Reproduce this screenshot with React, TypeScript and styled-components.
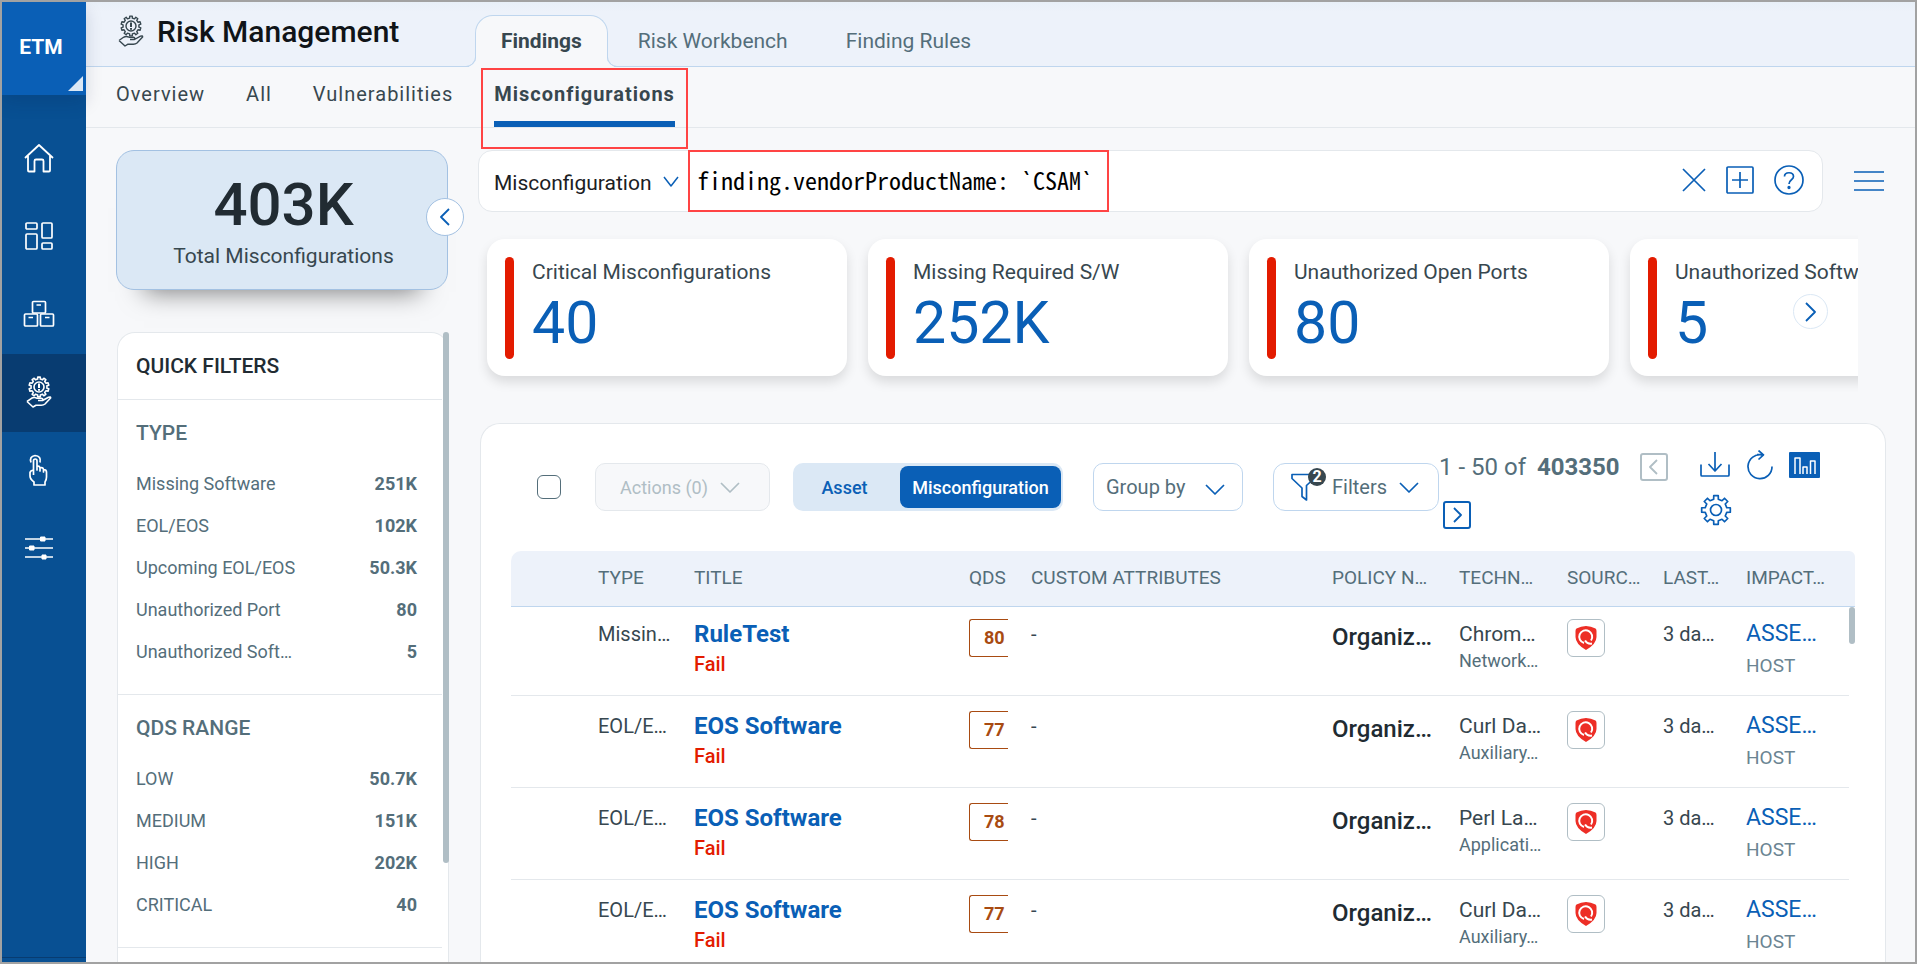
import React from "react";
import styled, { createGlobalStyle, css } from "styled-components";

const c = {
  blue: "#0a5fb6",
  rail: "#085093",
  railActive: "#083c71",
  page: "#f7f8fa",
  header: "#edf2fa",
  line: "#e4e8ec",
  blueLine: "#bfd6ee",
  paleBlue: "#dbe8f5",
  ink: "#212b32",
  text: "#37474f",
  muted: "#546e7a",
  faint: "#b0bec5",
  red: "#e31b00",
  mark: "#ff4444",
  amber: "#a84b12",
};

const GlobalStyle = createGlobalStyle`
  *, *::before, *::after { box-sizing: border-box; }
  body { margin: 0; background: ${c.page}; font-family: Roboto, "Liberation Sans", sans-serif; color: ${c.text}; }
  button, input, select { font: inherit; color: inherit; }
  button { cursor: pointer; background: none; border: 0; padding: 0; }
  a { color: inherit; text-decoration: none; }
  h1, h2, h3, p, ul, dl, dd { margin: 0; padding: 0; }
  ul { list-style: none; }
  svg { display: block; flex: none; }
`;

/* ---------- shell ---------- */
const Frame = styled.div`
  display: flex;
  height: 100vh;
  overflow: hidden;
  border: 2px solid #a2a2a2;
  background: ${c.page};
`;
const Rail = styled.nav`
  flex: 0 0 84px;
  display: flex;
  flex-direction: column;
  background: ${c.rail};
  color: #fff;
`;
const Product = styled.button`
  height: 93px;
  margin-bottom: 25px;
  padding: 0 6px 4px 0;
  position: relative;
  background: ${c.blue};
  color: #fff;
  font-size: 21px;
  font-weight: 700;
  box-shadow: 0 8px 16px rgba(0, 30, 70, 0.15);
  &::after {
    content: "";
    position: absolute;
    right: 3px;
    bottom: 4px;
    border-left: 15px solid transparent;
    border-bottom: 15px solid ${c.paleBlue};
  }
`;
const RailLink = styled.a<{ $active?: boolean }>`
  display: flex;
  justify-content: center;
  align-items: center;
  height: 78px;
  padding: 0 10px 2px 0;
  background: ${(p) => (p.$active ? c.railActive : "transparent")};
`;
const RailFoot = styled.div`
  height: 5px;
  margin-top: auto;
  border-top: 1px solid ${c.railActive};
`;
const Main = styled.main`
  flex: 1;
  min-width: 0;
  display: flex;
  flex-direction: column;
`;

/* ---------- header ---------- */
const Header = styled.header`
  flex: none;
  height: 65px;
  display: flex;
  background: linear-gradient(#e8f0f8, ${c.header} 10px);
  border-bottom: 1px solid ${c.blueLine};
`;
const TitleBox = styled.div`
  width: 389px;
  display: flex;
  gap: 13px;
  padding: 13px 0 0 32px;
`;
const Title = styled.h1`
  font-size: 30px;
  line-height: 34px;
  font-weight: 500;
  color: #101418;
`;
const Tabs = styled.nav`
  display: flex;
  align-items: flex-end;
`;
const Tab = styled.a<{ $active?: boolean }>`
  display: flex;
  align-items: center;
  height: 51px;
  padding: 0 27px;
  border: 1px solid transparent;
  border-bottom: 0;
  font-size: 21px;
  color: ${c.muted};
  ${(p) =>
    p.$active &&
    css`
      position: relative;
      height: 52px;
      margin-bottom: -1px;
      padding: 0 25px 2px;
      background: ${c.page};
      border-color: ${c.blueLine};
      border-radius: 18px 18px 0 0;
      font-weight: 700;
      color: ${c.text};
      &::before,
      &::after {
        content: "";
        position: absolute;
        bottom: 0;
        width: 10px;
        height: 12px;
        border-bottom: 1px solid ${c.blueLine};
      }
      &::before {
        right: 100%;
        border-right: 1px solid ${c.blueLine};
        border-bottom-right-radius: 10px;
        box-shadow: 3px 3px 0 ${c.page};
        clip-path: inset(0 -1px 0 0);
      }
      &::after {
        left: 100%;
        border-left: 1px solid ${c.blueLine};
        border-bottom-left-radius: 10px;
        box-shadow: -3px 3px 0 ${c.page};
        clip-path: inset(0 0 0 -1px);
      }
    `}
  & + & {
    margin-left: 2px;
  }
`;
const SubNav = styled.nav`
  flex: none;
  display: flex;
  gap: 41px;
  height: 61px;
  padding-left: 30px;
  border-bottom: 1px solid ${c.line};
`;
const SubLink = styled.a<{ $active?: boolean }>`
  position: relative;
  padding-top: 15px;
  font-size: 20px;
  line-height: 24px;
  letter-spacing: 1px;
  color: ${c.text};
  ${(p) =>
    p.$active &&
    css`
      font-weight: 700;
      border-bottom: 6px solid ${c.blue};
      &::after {
        content: "";
        position: absolute;
        inset: 1px -13px -28px -13px;
        border: 2px solid ${c.mark};
      }
    `}
`;

/* ---------- body ---------- */
const Body = styled.div`
  flex: 1;
  min-height: 0;
  display: flex;
  gap: 29px;
  padding: 22px 29px 0 30px;
`;
const Side = styled.aside`
  flex: 0 0 333px;
  display: flex;
  flex-direction: column;
  gap: 42px;
`;
const TotalCard = styled.section`
  position: relative;
  flex: none;
  height: 140px;
  margin-right: 1px;
  display: flex;
  flex-direction: column;
  align-items: center;
  padding: 19px 0 0 3px;
  background: ${c.paleBlue};
  border: 1px solid #a3c1e2;
  border-radius: 18px;
  box-shadow: 0 30px 24px -28px rgba(0, 0, 0, 0.5);
`;
const TotalValue = styled.strong`
  font-size: 60px;
  line-height: 70px;
  font-weight: 500;
  color: ${c.ink};
`;
const TotalLabel = styled.p`
  font-size: 21px;
  line-height: 32px;
`;
const Collapse = styled.button`
  position: absolute;
  right: -17px;
  top: 47px;
  display: grid;
  place-items: center;
  width: 38px;
  height: 38px;
  background: #fff;
  border: 1px solid #a3c1e2;
  border-radius: 50%;
  color: ${c.blue};
`;
const FilterPanel = styled.section`
  position: relative;
  flex: 1;
  min-height: 0;
  overflow: hidden;
  margin-left: 1px;
  background: #fff;
  border: 1px solid ${c.line};
  border-bottom: 0;
  border-radius: 18px 18px 0 0;
`;
const ScrollThumb = styled.span<{ $height: number }>`
  position: absolute;
  top: 0;
  right: 0;
  width: 6px;
  height: ${(p) => p.$height}px;
  border-radius: 3px;
  background: ${c.faint};
`;
const SideScroll = styled.div`
  position: relative;
  flex: 1;
  min-height: 0;
  display: flex;
`;
const PanelTitle = styled.h2`
  height: 67px;
  margin-right: 6px;
  padding: 0 18px;
  font-size: 21px;
  line-height: 66px;
  font-weight: 500;
  color: ${c.ink};
  border-bottom: 1px solid ${c.line};
`;
const FilterGroup = styled.section`
  margin-right: 6px;
  padding: 18px 25px 21px 18px;
  border-bottom: 1px solid ${c.line};
`;
const GroupTitle = styled.h3`
  padding-bottom: 15px;
  font-size: 21px;
  line-height: 30px;
  font-weight: 500;
  color: ${c.muted};
`;
const FilterRow = styled.a`
  display: flex;
  justify-content: space-between;
  font-size: 18px;
  line-height: 42px;
  color: ${c.muted};
`;
const Count = styled.b`
  font-weight: 700;
`;

/* ---------- content ---------- */
const Content = styled.div`
  flex: 1;
  min-width: 0;
  display: flex;
  flex-direction: column;
`;
const SearchRow = styled.div`
  flex: none;
  display: flex;
  align-items: center;
  gap: 31px;
  padding-right: 2px;
`;
const SearchBox = styled.form`
  flex: 1;
  display: flex;
  align-items: center;
  height: 62px;
  padding-right: 18px;
  background: #fff;
  border: 1px solid ${c.line};
  border-radius: 14px;
`;
const SelectWrap = styled.label<{ $width: number; $outlined?: boolean }>`
  flex: none;
  display: flex;
  align-items: center;
  position: relative;
  width: ${(p) => p.$width}px;
  height: 48px;
  color: ${c.blue};
  border-radius: 10px;
  border: 1px solid ${(p) => (p.$outlined ? c.blueLine : "transparent")};
  select {
    appearance: none;
    width: 100%;
    height: 100%;
    padding: ${(p) => (p.$outlined ? "0 0 0 12px" : "3px 0 0 14px")};
    border: 0;
    outline: 0;
    background: transparent;
    font-size: ${(p) => (p.$outlined ? 20 : 21)}px;
    color: ${(p) => (p.$outlined ? c.muted : "#1b2023")};
  }
  svg {
    position: absolute;
    right: ${(p) => (p.$outlined ? 17 : 8)}px;
    top: ${(p) => (p.$outlined ? 20 : 18)}px;
    pointer-events: none;
  }
`;
const QueryBox = styled.div`
  flex: 0 1 421px;
  height: 62px;
  border: 2px solid ${c.mark};
  input {
    width: 100%;
    height: 100%;
    padding: 0 0 4px 7px;
    border: 0;
    outline: 0;
    background: transparent;
    font-family: "Noto Sans Mono CJK SC", "Liberation Mono", monospace;
    font-size: 24px;
    color: #000;
  }
`;
const SearchActions = styled.div`
  margin-left: auto;
  display: flex;
  align-items: center;
  gap: 20px;
  padding-bottom: 3px;
  color: ${c.blue};
`;
const IconButton = styled.button`
  flex: none;
  color: ${c.blue};
  &:disabled {
    color: ${c.faint};
  }
`;

const Strip = styled.section`
  position: relative;
  flex: none;
  margin: 17px 28px 25px 0;
`;
const Cards = styled.div`
  display: flex;
  gap: 21px;
  overflow: hidden;
  padding: 10px 0 22px 9px;
`;
const Card = styled.article`
  flex: 0 0 360px;
  display: flex;
  gap: 18px;
  height: 137px;
  padding: 18px;
  background: #fff;
  border-radius: 18px;
  box-shadow: 0 6px 12px rgba(0, 0, 0, 0.12);
  white-space: nowrap;
  &::before {
    content: "";
    flex: 0 0 9px;
    height: 102px;
    border-radius: 5px;
    background: ${c.red};
  }
`;
const CardLabel = styled.p`
  font-size: 21px;
  line-height: 30px;
`;
const CardValue = styled.strong`
  font-size: 59px;
  line-height: 72px;
  font-weight: 400;
  color: ${c.blue};
`;
const NextCards = styled.button`
  position: absolute;
  right: 30px;
  top: 65px;
  display: grid;
  place-items: center;
  width: 35px;
  height: 35px;
  border: 1px solid ${c.paleBlue};
  border-radius: 50%;
  background: #fff;
  color: ${c.blue};
`;

const Results = styled.section`
  flex: 1;
  min-height: 0;
  overflow: hidden;
  display: flex;
  flex-direction: column;
  margin-left: 2px;
  padding: 0 30px;
  background: #fff;
  border: 1px solid ${c.line};
  border-bottom: 0;
  border-radius: 20px 20px 0 0;
`;
const Toolbar = styled.div`
  flex: none;
  display: flex;
  height: 127px;
  padding: 23px 35px 0 26px;
`;
const Check = styled.input`
  appearance: none;
  flex: none;
  width: 24px;
  height: 24px;
  margin: 28px 34px 0 0;
  border: 1px solid ${c.muted};
  border-radius: 6px;
  background: #fff;
`;
const Controls = styled.div`
  flex: none;
  display: flex;
  margin-top: 16px;
  height: 48px;
`;
const ActionsButton = styled.button`
  display: flex;
  align-items: center;
  justify-content: center;
  gap: 12px;
  width: 175px;
  margin-right: 23px;
  padding-right: 5px;
  background: ${c.page};
  border: 1px solid ${c.line};
  border-radius: 10px;
  font-size: 18px;
  color: ${c.faint};
`;
const Toggle = styled.div`
  display: flex;
  width: 270px;
  margin-right: 30px;
  padding: 3px 2px;
  border-radius: 10px;
  background: ${c.paleBlue};
`;
const ToggleButton = styled.button<{ $on?: boolean }>`
  flex: ${(p) => (p.$on ? "0 0 161px" : "1")};
  padding-right: ${(p) => (p.$on ? 0 : 6)}px;
  border-radius: 8px;
  font-size: 18px;
  font-weight: 500;
  background: ${(p) => (p.$on ? c.blue : "transparent")};
  color: ${(p) => (p.$on ? "#fff" : c.blue)};
`;
const FiltersButton = styled.button`
  position: relative;
  display: flex;
  align-items: center;
  width: 166px;
  margin-left: 30px;
  padding-left: 17px;
  border: 1px solid ${c.blueLine};
  border-radius: 12px;
  font-size: 20px;
  color: ${c.muted};
  svg {
    color: ${c.blue};
  }
  span {
    margin: 0 12px 0 17px;
  }
`;
const Badge = styled.b`
  position: absolute;
  left: 34px;
  top: 4px;
  width: 18px;
  height: 18px;
  border-radius: 50%;
  background: ${c.text};
  color: #fff;
  font-size: 16px;
  line-height: 18px;
  text-align: center;
`;
const Pager = styled.div`
  flex: 0 1 230px;
  display: flex;
  flex-wrap: wrap;
  align-items: center;
  align-content: flex-start;
  row-gap: 10px;
  font-size: 24px;
  line-height: 40px;
  color: ${c.muted};
  b {
    font-weight: 700;
    margin: 0 20px 0 11px;
  }
`;
const PageButton = styled.button<{ $next?: boolean }>`
  display: grid;
  place-items: center;
  width: 28px;
  height: 28px;
  margin: 4px;
  margin-left: ${(p) => (p.$next ? 4 : 0)}px;
  margin-right: 0;
  border: 2px solid ${(p) => (p.$next ? c.blue : c.faint)};
  border-radius: 3px;
  color: ${(p) => (p.$next ? c.blue : c.faint)};
`;
const Tools = styled.div`
  flex: none;
  margin-left: auto;
  width: 120px;
  display: flex;
  flex-wrap: wrap;
  align-content: flex-start;
  align-items: center;
  justify-content: space-between;
  row-gap: 14px;
  padding-top: 3px;
`;

/* ---------- table ---------- */
const TableWrap = styled.div`
  position: relative;
`;
const Table = styled.table`
  width: 100%;
  table-layout: fixed;
  border-collapse: separate;
  border-spacing: 0;
  text-align: left;
`;
const Th = styled.th`
  height: 56px;
  padding: 0 0 2px;
  background: ${c.header};
  border-bottom: 1px solid ${c.blueLine};
  font-size: 19px;
  font-weight: 400;
  white-space: nowrap;
  color: ${c.muted};
  &:first-child { border-top-left-radius: 10px; }
`;
const HeadEnd = styled.td`
  padding: 0;
  background: ${c.header};
  border-bottom: 1px solid ${c.blueLine};
  border-top-right-radius: 10px;
`;
const Td = styled.td`
  height: 92px;
  padding: 15px 0 0;
  vertical-align: top;
  border-bottom: 1px solid ${c.line};
  white-space: nowrap;
  overflow: hidden;
  tr:first-child > & {
    height: 89px;
    padding-top: 12px;
  }
`;
const Plain = styled.div<{ $large?: boolean }>`
  font-size: ${(p) => (p.$large ? 21 : 20)}px;
  line-height: 30px;
`;
const FindingLink = styled.a`
  display: block;
  font-size: 24px;
  line-height: 30px;
  font-weight: 700;
  color: ${c.blue};
`;
const Status = styled.div`
  font-size: 20px;
  line-height: 30px;
  font-weight: 500;
  color: ${c.red};
`;
const Score = styled.div`
  width: 39px;
  height: 38px;
  padding-left: 14px;
  border: 1px solid ${c.amber};
  border-right: 0;
  border-radius: 3px 0 0 3px;
  font-size: 18px;
  line-height: 36px;
  font-weight: 700;
  color: ${c.amber};
`;
const Policy = styled.div`
  padding-top: 3px;
  font-size: 24px;
  line-height: 30px;
  font-weight: 500;
  color: ${c.ink};
`;
const Secondary = styled.div`
  font-size: 18px;
  line-height: 24px;
  color: ${c.muted};
`;
const Source = styled.div`
  display: grid;
  place-items: center;
  width: 38px;
  height: 38px;
  border: 1px solid ${c.faint};
  border-radius: 6px;
`;
const AssetLink = styled.a`
  display: block;
  font-size: 23px;
  line-height: 30px;
  color: ${c.blue};
`;
const Host = styled.div`
  font-size: 19px;
  line-height: 34px;
  color: #6b8492;
`;
const TableThumb = styled.span`
  position: absolute;
  right: 0;
  top: 56px;
  width: 6px;
  height: 37px;
  border-radius: 3px;
  background: ${c.faint};
`;

/* ---------- icons ---------- */
const gearPath = (cx: number, cy: number, r: number, tooth: number, n: number) => {
  const pts: string[] = [];
  const step = (Math.PI * 2) / n;
  for (let i = 0; i < n; i++) {
    const a = i * step - Math.PI / 2;
    [
      [-0.27, r],
      [-0.2, r + tooth],
      [0.2, r + tooth],
      [0.27, r],
    ].forEach(([f, rad]) => {
      pts.push(`${(cx + Math.cos(a + f * step) * rad).toFixed(2)} ${(cy + Math.sin(a + f * step) * rad).toFixed(2)}`);
    });
  }
  return `M${pts.join("L")}Z`;
};

const Svg = ({ w, h = w, sw = 1.7, children }: { w: number; h?: number; sw?: number; children: React.ReactNode }) => (
  <svg width={w} height={h} viewBox={`0 0 ${w} ${h}`} fill="none" stroke="currentColor" strokeWidth={sw} strokeLinejoin="round" aria-hidden>
    {children}
  </svg>
);
const Chevron = ({ w = 18, sw = 1.7 }: { w?: number; sw?: number }) => (
  <Svg w={w} h={11} sw={sw}><path d={`M1 1L${w / 2} 10L${w - 1} 1`} /></Svg>
);
const Arrow = ({ left, sw = 1.8, w = 10, h = 18 }: { left?: boolean; sw?: number; w?: number; h?: number }) => (
  <Svg w={w} h={h} sw={sw}><path d={left ? `M${w - 1} 1L1 ${h / 2}L${w - 1} ${h - 1}` : `M1 1L${w - 1} ${h / 2}L1 ${h - 1}`} /></Svg>
);
const HomeIcon = () => (
  <Svg w={30} sw={1.8}><path d="M1 15L15 2L29 15M4 13V27.500Q4 28.500 5 28.500H10.500V18Q10.500 16.500 12 16.500H18Q19.500 16.500 19.500 18V28.500H25Q26 28.500 26 27.500V13" /></Svg>
);
const DashIcon = () => (
  <Svg w={30}>
    <rect x="2" y="2" width="11" height="6" rx="1" /><rect x="2" y="13" width="11" height="15" rx="1" />
    <rect x="18" y="2" width="10" height="15" rx="1" /><rect x="18" y="22" width="10" height="6" rx="1" />
  </Svg>
);
const BoxesIcon = () => (
  <Svg w={32} h={28}>
    <rect x="9.500" y="1.500" width="13" height="11.500" rx="1" /><rect x="1.500" y="14" width="13" height="12" rx="1" />
    <rect x="17.500" y="14" width="13" height="12" rx="1" /><path d="M13.500 5H18M5.500 17.500H10M22 17.500H26.500" />
  </Svg>
);
const RiskIcon = ({ sw = 1.6 }: { sw?: number }) => (
  <Svg w={26} h={32} sw={sw}>
    <path d={gearPath(13, 11, 8, 2, 10)} /><circle cx="13" cy="11" r="5" />
    <path d="M13 7.500V12M13 13V14.700" strokeWidth="2" />
    <path d="M1 25.500L5.500 22.300Q8 20.800 11 22.200H15.500Q17.500 22.600 16.500 24.500H12M16.500 24.500L22.500 21.200Q25 20.400 24.600 22L19 28Q17.500 29.300 15 29.200H10L7 31L1 25.500" />
  </Svg>
);
const TouchIcon = () => (
  <Svg w={22} h={32}>
    <path d="M3 8.500Q1 2.500 7 1.500Q13.500 2 12 8.500" />
    <path d="M5.500 21V7Q5.500 5 7.300 5Q9 5 9 7V16V12.500Q11.500 11.500 12 14V17V14Q15 13 15.500 15.500V18V15.500Q18.500 15.500 18.500 18V23Q18.500 26 17 28V31H6V28Q2 25 2 22V18.500Q2.500 16.500 5.500 16" />
  </Svg>
);
const SlidersIcon = () => (
  <Svg w={28} h={24}>
    <path d="M0 3H28M0 12H28M0 21H28" />
    <path d="M15.500 1H20V5H15.500ZM4.500 10H9V14H4.500ZM17 19H21V23H17Z" fill="currentColor" strokeWidth="1" />
  </Svg>
);
const CloseIcon = () => <Svg w={24}><path d="M1 1L23 23M23 1L1 23" /></Svg>;
const PlusIcon = () => <Svg w={28}><rect x="1" y="1" width="26" height="26" rx="1" /><path d="M14 6V22M6 14H22" /></Svg>;
const HelpIcon = () => (
  <Svg w={30}><circle cx="15" cy="15" r="14" /><path d="M10.500 11.500C10.500 6.500 19.500 6.500 19.500 11.500C19.500 15 15 14.500 15 19" /><circle cx="15" cy="22.500" r="0.800" fill="currentColor" /></Svg>
);
const MenuIcon = () => <Svg w={30} h={22}><path d="M0 2H30M0 11H30M0 20H30" /></Svg>;
const FunnelIcon = () => (
  <Svg w={24} h={28}><path d="M1 1.500H23V5.500L15.500 12.500V27L11 23.500V15L1 5.500Z" /></Svg>
);
const DownloadIcon = () => (
  <Svg w={30} h={26}><path d="M15 0V19M8.500 12L15 19L21.500 12M1 12.500V23Q1 24 2 24H28Q29 24 29 23V12.500" /></Svg>
);
const RefreshIcon = () => (
  <Svg w={28} h={30}><path d="M26 16.500A12 12 0 1 1 16 4.800M11 4.500H17.500M12.500 0.500L17.500 4.800L12.500 9.500" /></Svg>
);
const ChartIcon = () => (
  <Svg w={31} h={26} sw={1.5}>
    <rect width="31" height="26" rx="1" fill="currentColor" stroke="none" />
    <path d="M6 22V6H11V22M14 22V15H18V22M21.500 22V9H26V22" stroke="#fff" />
  </Svg>
);
const GearIcon = () => <Svg w={32}><path d={gearPath(16, 16, 11, 3.500, 8)} /><circle cx="16" cy="16" r="5.500" /></Svg>;
const ShieldIcon = () => (
  <svg width="22" height="24" viewBox="0 0 22 24" aria-hidden>
    <path d="M11 0Q16 0 20.500 2.500Q21.500 3 21.500 5V11Q21.500 18 11 24Q.5 18 .5 11V5Q.5 3 1.500 2.500Q6 0 11 0Z" fill="#ed2e26" />
    <path d="M9 17A6.500 6.500 0 1 1 16 14.500" fill="none" stroke="#fff" strokeWidth="2" />
    <path d="M10 14.500Q12.500 18.500 17 17.500" fill="none" stroke="#fff" strokeWidth="2" />
  </svg>
);

/* ---------- data ---------- */
const groups = [
  { title: "TYPE", rows: [["Missing Software", "251K"], ["EOL/EOS", "102K"], ["Upcoming EOL/EOS", "50.3K"], ["Unauthorized Port", "80"], ["Unauthorized Soft…", "5"]] },
  { title: "QDS RANGE", rows: [["LOW", "50.7K"], ["MEDIUM", "151K"], ["HIGH", "202K"], ["CRITICAL", "40"]] },
];
const cards = [
  ["Critical Misconfigurations", "40"],
  ["Missing Required S/W", "252K"],
  ["Unauthorized Open Ports", "80"],
  ["Unauthorized Software", "5"],
];
const columns: [string, number | undefined][] = [
  ["", 87], ["TYPE", 96], ["TITLE", 275], ["QDS", 62], ["CUSTOM ATTRIBUTES", undefined], ["POLICY N…", 127],
  ["TECHN…", 108], ["SOURC…", 96], ["LAST…", 83], ["IMPACT…", 103],
];
const rows = [
  { type: "Missin…", title: "RuleTest", qds: 80, tech: "Chrom…", kind: "Network…" },
  { type: "EOL/E…", title: "EOS Software", qds: 77, tech: "Curl Da…", kind: "Auxiliary…" },
  { type: "EOL/E…", title: "EOS Software", qds: 78, tech: "Perl La…", kind: "Applicati…" },
  { type: "EOL/E…", title: "EOS Software", qds: 77, tech: "Curl Da…", kind: "Auxiliary…" },
];

export default function App() {
  return (
    <>
      <GlobalStyle />
      <Frame>
        <Rail aria-label="Modules">
          <Product type="button">ETM</Product>
          <RailLink href="#home" aria-label="Home"><HomeIcon /></RailLink>
          <RailLink href="#dashboards" aria-label="Dashboards"><DashIcon /></RailLink>
          <RailLink href="#inventory" aria-label="Inventory"><BoxesIcon /></RailLink>
          <RailLink href="#risk" aria-label="Risk Management" $active><RiskIcon /></RailLink>
          <RailLink href="#responses" aria-label="Responses"><TouchIcon /></RailLink>
          <RailLink href="#configuration" aria-label="Configuration"><SlidersIcon /></RailLink>
          <RailFoot />
        </Rail>
        <Main>
          <Header>
            <TitleBox>
              <RiskIcon sw={1.4} />
              <Title>Risk Management</Title>
            </TitleBox>
            <Tabs>
              <Tab href="#findings" $active>Findings</Tab>
              <Tab href="#workbench">Risk Workbench</Tab>
              <Tab href="#rules">Finding Rules</Tab>
            </Tabs>
          </Header>
          <SubNav>
            <SubLink href="#overview">Overview</SubLink>
            <SubLink href="#all">All</SubLink>
            <SubLink href="#vulnerabilities">Vulnerabilities</SubLink>
            <SubLink href="#misconfigurations" $active>Misconfigurations</SubLink>
          </SubNav>
          <Body>
            <Side>
              <TotalCard>
                <TotalValue>403K</TotalValue>
                <TotalLabel>Total Misconfigurations</TotalLabel>
                <Collapse type="button" aria-label="Collapse filters"><Arrow left /></Collapse>
              </TotalCard>
              <SideScroll>
                <FilterPanel>
                  <PanelTitle>QUICK FILTERS</PanelTitle>
                  {groups.map((g) => (
                    <FilterGroup key={g.title}>
                      <GroupTitle>{g.title}</GroupTitle>
                      <ul>
                        {g.rows.map(([label, count]) => (
                          <li key={label}><FilterRow href="#filter">{label}<Count>{count}</Count></FilterRow></li>
                        ))}
                      </ul>
                    </FilterGroup>
                  ))}
                </FilterPanel>
                <ScrollThumb $height={531} />
              </SideScroll>
            </Side>
            <Content>
              <SearchRow>
                <SearchBox>
                  <SelectWrap $width={209}>
                    <select aria-label="Search scope"><option>Misconfiguration</option></select>
                    <Chevron w={16} sw={1.5} />
                  </SelectWrap>
                  <QueryBox>
                    <input aria-label="Query" defaultValue="finding.vendorProductName: `CSAM`" spellCheck={false} />
                  </QueryBox>
                  <SearchActions>
                    <IconButton type="button" aria-label="Clear"><CloseIcon /></IconButton>
                    <IconButton type="button" aria-label="Add"><PlusIcon /></IconButton>
                    <IconButton type="button" aria-label="Help"><HelpIcon /></IconButton>
                  </SearchActions>
                </SearchBox>
                <IconButton type="button" aria-label="Menu"><MenuIcon /></IconButton>
              </SearchRow>
              <Strip>
                <Cards>
                  {cards.map(([label, value]) => (
                    <Card key={label}>
                      <div>
                        <CardLabel>{label}</CardLabel>
                        <CardValue>{value}</CardValue>
                      </div>
                    </Card>
                  ))}
                </Cards>
                <NextCards type="button" aria-label="Next cards"><Arrow h={20} w={11} /></NextCards>
              </Strip>
              <Results>
                <Toolbar>
                  <Check type="checkbox" aria-label="Select all" />
                  <Controls>
                    <ActionsButton type="button" disabled>Actions (0)<Chevron w={20} /></ActionsButton>
                    <Toggle>
                      <ToggleButton type="button">Asset</ToggleButton>
                      <ToggleButton type="button" $on>Misconfiguration</ToggleButton>
                    </Toggle>
                    <SelectWrap $width={150} $outlined>
                      <select aria-label="Group by"><option>Group by</option></select>
                      <Chevron w={20} />
                    </SelectWrap>
                    <FiltersButton type="button">
                      <FunnelIcon /><Badge>2</Badge><span>Filters</span><Chevron w={20} />
                    </FiltersButton>
                  </Controls>
                  <Pager>
                    1 - 50 of <b>403350</b>
                    <PageButton type="button" disabled aria-label="Previous page"><Arrow left w={9} h={16} /></PageButton>
                    <PageButton type="button" $next aria-label="Next page"><Arrow w={9} h={16} /></PageButton>
                  </Pager>
                  <Tools>
                    <IconButton type="button" aria-label="Download"><DownloadIcon /></IconButton>
                    <IconButton type="button" aria-label="Refresh"><RefreshIcon /></IconButton>
                    <IconButton type="button" aria-label="Charts"><ChartIcon /></IconButton>
                    <IconButton type="button" aria-label="Settings"><GearIcon /></IconButton>
                  </Tools>
                </Toolbar>
                <TableWrap>
                  <Table>
                    <colgroup>
                      {columns.map(([name, width], i) => <col key={name || i} width={width} />)}
                      <col width={6} />
                    </colgroup>
                    <thead>
                      <tr>
                        {columns.map(([name], i) => <Th key={name || i} scope="col">{name}</Th>)}
                        <HeadEnd />
                      </tr>
                    </thead>
                    <tbody>
                      {rows.map((r, i) => (
                        <tr key={i}>
                          <Td />
                          <Td><Plain>{r.type}</Plain></Td>
                          <Td><FindingLink href="#finding">{r.title}</FindingLink><Status>Fail</Status></Td>
                          <Td><Score>{r.qds}</Score></Td>
                          <Td><Plain>-</Plain></Td>
                          <Td><Policy>Organiz…</Policy></Td>
                          <Td><Plain $large>{r.tech}</Plain><Secondary>{r.kind}</Secondary></Td>
                          <Td><Source><ShieldIcon /></Source></Td>
                          <Td><Plain>3 da…</Plain></Td>
                          <Td><AssetLink href="#asset">ASSE…</AssetLink><Host>HOST</Host></Td>
                        </tr>
                      ))}
                    </tbody>
                  </Table>
                  <TableThumb />
                </TableWrap>
              </Results>
            </Content>
          </Body>
        </Main>
      </Frame>
    </>
  );
}
